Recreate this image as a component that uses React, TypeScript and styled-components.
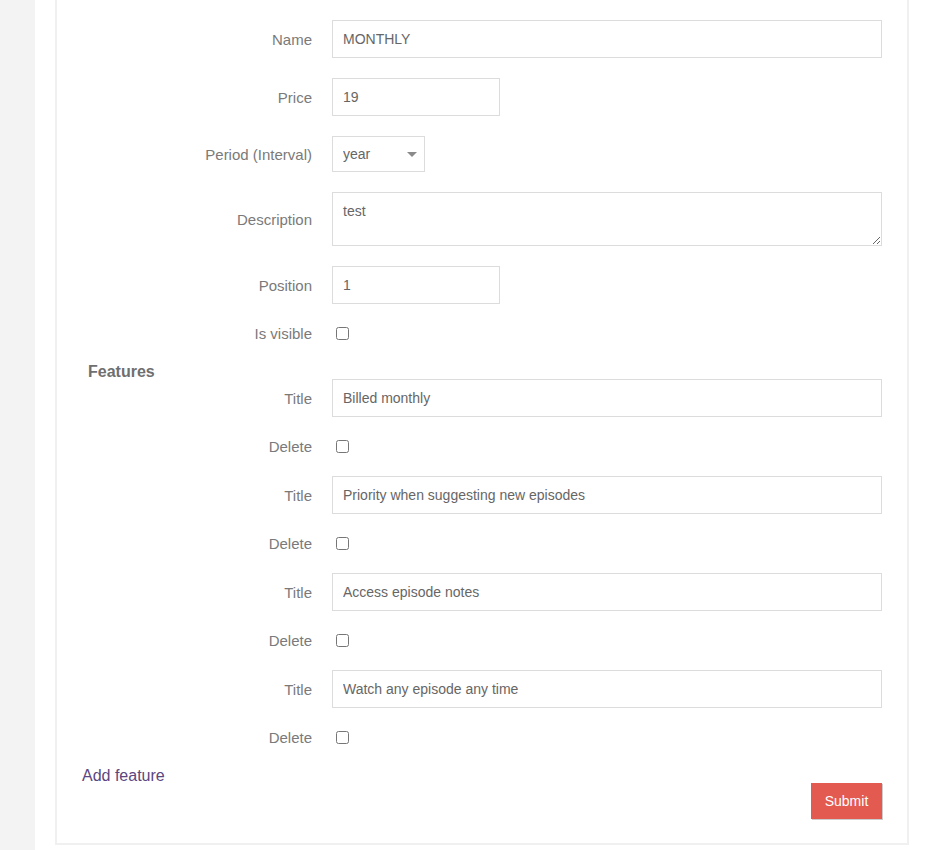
import styled, { createGlobalStyle } from "styled-components";

const GlobalStyle = createGlobalStyle`
  html, body {
    margin: 0;
    padding: 0;
    background: #fff;
    font-family: "Liberation Sans", Arial, sans-serif;
  }
  * {
    box-sizing: border-box;
  }
`;

const Page = styled.div`
  display: flex;
  min-height: 850px;
`;

const Sidebar = styled.aside`
  width: 35px;
  flex-shrink: 0;
  background: #f3f3f3;
`;

const Main = styled.main`
  flex: 1;
  padding-left: 20px;
`;

const Card = styled.section`
  width: 854px;
  border: 2px solid #f0f0f0;
  border-top: none;
  padding: 20px 25px 24px 25px;
  background: #fff;
`;

const Form = styled.form`
  display: flex;
  flex-direction: column;
  gap: 20px;
`;

const Row = styled.div`
  display: grid;
  grid-template-columns: 230px 1fr;
  column-gap: 20px;
  align-items: center;
`;

const Label = styled.label`
  text-align: right;
  font-size: 15px;
  line-height: 17px;
  color: #7a7a7a;
`;

const Field = styled.div`
  display: flex;
  align-items: center;
`;

const TextInput = styled.input<{ $width?: number }>`
  width: ${(p) => (p.$width ? `${p.$width}px` : "100%")};
  height: 38px;
  padding: 0 10px;
  border: 1px solid #dcdcdc;
  border-radius: 0;
  font-family: inherit;
  font-size: 14px;
  color: #666;
  background: #fff;
  outline: none;
`;

const TextArea = styled.textarea`
  width: 100%;
  height: 54px;
  padding: 10px 10px;
  border: 1px solid #dcdcdc;
  border-radius: 0;
  font-family: inherit;
  font-size: 14px;
  line-height: 16px;
  color: #666;
  resize: vertical;
  outline: none;
`;

const SelectWrap = styled.div`
  position: relative;
  width: 93px;
  height: 36px;

  &::after {
    content: "";
    position: absolute;
    right: 8px;
    top: 16px;
    border-left: 5px solid transparent;
    border-right: 5px solid transparent;
    border-top: 5px solid #8a8a8a;
    pointer-events: none;
  }
`;

const Select = styled.select`
  appearance: none;
  -webkit-appearance: none;
  width: 100%;
  height: 100%;
  padding: 0 10px;
  border: 1px solid #dcdcdc;
  border-radius: 0;
  background: #fff;
  font-family: inherit;
  font-size: 14px;
  color: #666;
  outline: none;
`;

const Checkbox = styled.input.attrs({ type: "checkbox" })`
  width: 13px;
  height: 13px;
  margin: 3px 3px 3px 4px;
`;

const FeaturesSection = styled.div`
  display: flex;
  flex-direction: column;
`;

const FeaturesHeading = styled.h3`
  margin: 1px 0 -1px 6px;
  font-size: 16px;
  line-height: 16px;
  font-weight: bold;
  color: #6f6f6f;
`;

const FeatureList = styled.div`
  display: flex;
  flex-direction: column;
  gap: 20px;
`;

const Footer = styled.div`
  display: flex;
  flex-direction: column;
`;

const AddLink = styled.a`
  align-self: flex-start;
  margin: 1px 0 -1px;
  font-size: 16px;
  line-height: 16px;
  color: #5b4680;
  text-decoration: none;
  cursor: pointer;
`;

const SubmitButton = styled.button`
  align-self: flex-end;
  width: 71px;
  height: 36px;
  border: none;
  border-radius: 0;
  background: #e35a50;
  box-shadow: 1px 1px 0 rgba(0, 0, 0, 0.2);
  color: #fff;
  font-family: inherit;
  font-size: 14px;
  cursor: pointer;
`;

const features = [
  "Billed monthly",
  "Priority when suggesting new episodes",
  "Access episode notes",
  "Watch any episode any time",
];

function App() {
  return (
    <>
      <GlobalStyle />
      <Page>
        <Sidebar />
        <Main>
          <Card>
            <Form onSubmit={(e) => e.preventDefault()}>
              <Row>
                <Label>Name</Label>
                <Field>
                  <TextInput defaultValue="MONTHLY" />
                </Field>
              </Row>
              <Row>
                <Label>Price</Label>
                <Field>
                  <TextInput $width={168} defaultValue="19" />
                </Field>
              </Row>
              <Row>
                <Label>Period (Interval)</Label>
                <Field>
                  <SelectWrap>
                    <Select defaultValue="year">
                      <option value="month">month</option>
                      <option value="year">year</option>
                    </Select>
                  </SelectWrap>
                </Field>
              </Row>
              <Row>
                <Label>Description</Label>
                <Field>
                  <TextArea defaultValue="test" />
                </Field>
              </Row>
              <Row>
                <Label>Position</Label>
                <Field>
                  <TextInput $width={168} defaultValue="1" />
                </Field>
              </Row>
              <Row>
                <Label>Is visible</Label>
                <Field>
                  <Checkbox />
                </Field>
              </Row>
              <FeaturesSection>
                <FeaturesHeading>Features</FeaturesHeading>
                <FeatureList>
                  {features.map((title, idx) => (
                    <FeatureList key={idx}>
                      <Row>
                        <Label>Title</Label>
                        <Field>
                          <TextInput defaultValue={title} />
                        </Field>
                      </Row>
                      <Row>
                        <Label>Delete</Label>
                        <Field>
                          <Checkbox />
                        </Field>
                      </Row>
                    </FeatureList>
                  ))}
                </FeatureList>
              </FeaturesSection>
              <Footer>
                <AddLink>Add feature</AddLink>
                <SubmitButton type="submit">Submit</SubmitButton>
              </Footer>
            </Form>
          </Card>
        </Main>
      </Page>
    </>
  );
}

export default App;
